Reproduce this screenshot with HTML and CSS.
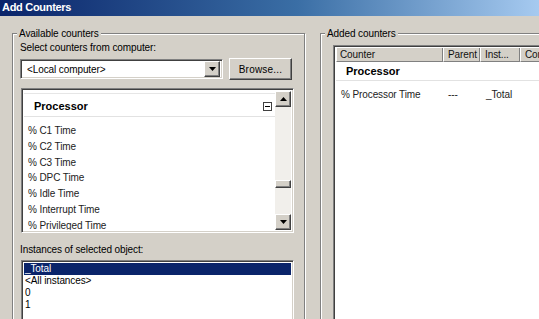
FILE: index.html
```html
<!DOCTYPE html>
<html lang="en">
<head>
    <meta charset="UTF-8">
    <title>Add Counters</title>
    <link rel="stylesheet" href="styles.css">
</head>
<body>

<div class="titlebar">Add Counters</div>

<div class="dialog">
    <div class="group group-left">
        <span class="group-title">Available counters</span>

        <div class="label">Select counters from computer:</div>
        <div class="combo-row">
            <div class="combo">
                <span class="combo-text">&lt;Local computer&gt;</span>
                <span class="btn3d arrow-btn">
                    <svg width="7" height="4" viewBox="0 0 7 4"><path d="M0 0h7L3.5 4z" fill="#000"/></svg>
                </span>
            </div>
            <button class="btn3d btn-browse">Browse...</button>
        </div>

        <div class="listbox object-list">
            <div class="list-body">
                <div class="group-sep"></div>
                <div class="object-head">
                    <span>Processor</span>
                    <span class="minus-box"></span>
                </div>
                <div class="object-items">
                    <div class="item">% C1 Time</div>
                    <div class="item">% C2 Time</div>
                    <div class="item">% C3 Time</div>
                    <div class="item">% DPC Time</div>
                    <div class="item">% Idle Time</div>
                    <div class="item">% Interrupt Time</div>
                    <div class="item">% Privileged Time</div>
                </div>
            </div>
            <div class="scrollbar">
                <span class="btn3d scroll-btn">
                    <svg width="7" height="4" viewBox="0 0 7 4"><path d="M0 4h7L3.5 0z" fill="#000"/></svg>
                </span>
                <div class="track">
                    <span class="btn3d thumb"></span>
                </div>
                <span class="btn3d scroll-btn">
                    <svg width="7" height="4" viewBox="0 0 7 4"><path d="M0 0h7L3.5 4z" fill="#000"/></svg>
                </span>
            </div>
        </div>

        <div class="label label-instances">Instances of selected object:</div>
        <div class="listbox instance-list">
            <div class="inst selected">_Total</div>
            <div class="inst">&lt;All instances&gt;</div>
            <div class="inst">0</div>
            <div class="inst">1</div>
        </div>
    </div>

    <div class="group group-right">
        <span class="group-title">Added counters</span>

        <div class="listview">
            <div class="lv-header">
                <span class="col col-counter">Counter</span>
                <span class="col col-parent">Parent</span>
                <span class="col col-inst">Inst...</span>
                <span class="col col-comp">Computer</span>
            </div>
            <div class="lv-group">Processor</div>
            <div class="lv-row">
                <span class="cell col-counter">% Processor Time</span>
                <span class="cell col-parent">---</span>
                <span class="cell col-inst">_Total</span>
            </div>
        </div>
    </div>
</div>

</body>
</html>
```

FILE: styles.css
```css
body {
    margin: 0;
    width: 539px;
    height: 319px;
    overflow: hidden;
    background-color: #d4d0c8;
    font-family: 'Liberation Sans', Arial, sans-serif;
    font-size: 10px;
    letter-spacing: -0.1px;
    color: #000;
}

.titlebar {
    height: 16px;
    line-height: 15px;
    padding-left: 2px;
    background: linear-gradient(to right, #0a246a, #3a6ea5 55%, #a6caf0);
    color: #fff;
    font-size: 11px;
    font-weight: bold;
    letter-spacing: -0.3px;
}

.dialog {
    display: flex;
    padding: 17px 0 0 12px;
}

.group {
    position: relative;
    box-sizing: border-box;
    height: 300px;
    border: 1px solid #808080;
    box-shadow: inset 1px 1px 0 #fff, 1px 1px 0 #fff;
}

.group-left {
    width: 293px;
    flex-shrink: 0;
    padding: 7px 0 0 7px;
}

.group-right {
    width: 240px;
    flex-shrink: 0;
    margin-left: 15px;
    padding: 11px 0 0 12px;
}

.group-title {
    position: absolute;
    top: -7px;
    left: 4px;
    padding: 0 2px;
    line-height: 13px;
    background-color: #d4d0c8;
}

.label {
    line-height: 13px;
}

.btn3d {
    box-sizing: border-box;
    display: flex;
    align-items: center;
    justify-content: center;
    background-color: #d4d0c8;
    border: 1px solid;
    border-color: #fff #404040 #404040 #fff;
    box-shadow: inset -1px -1px 0 #808080, inset 1px 1px 0 #d4d0c8;
}

.combo-row {
    display: flex;
    align-items: center;
    margin-top: 4px;
}

.combo {
    box-sizing: border-box;
    display: flex;
    align-items: center;
    justify-content: space-between;
    width: 203px;
    height: 20px;
    padding: 2px;
    background-color: #fff;
    border: 1px solid;
    border-color: #808080 #fff #fff #808080;
    box-shadow: inset 1px 1px 0 #404040, inset -1px -1px 0 #d4d0c8;
}

.combo-text {
    padding-left: 4px;
}

.arrow-btn {
    width: 16px;
    height: 16px;
}

.btn-browse {
    width: 63px;
    height: 22px;
    margin-left: 6px;
    padding: 0;
    font-family: inherit;
    font-size: 10px;
    letter-spacing: 0.2px;
    color: #000;
}

.listbox {
    box-sizing: border-box;
    background-color: #fff;
    border: 1px solid;
    border-color: #808080 #fff #fff #808080;
    box-shadow: inset 1px 1px 0 #404040, inset -1px -1px 0 #d4d0c8;
    padding: 2px;
}

.object-list {
    display: flex;
    width: 273px;
    height: 145px;
    margin: 8px 0 0 1px;
}

.list-body {
    flex: 1;
    overflow: hidden;
}

.group-sep {
    height: 1px;
    margin: 2px 0 0;
    background-color: #e6e6e6;
}

.object-head {
    display: flex;
    justify-content: space-between;
    align-items: center;
    padding: 6px 3px 3px 10px;
    line-height: 13px;
    font-weight: bold;
    font-size: 11px;
    letter-spacing: 0;
    border-bottom: 1px solid #e2e2e2;
}

.minus-box {
    position: relative;
    box-sizing: border-box;
    width: 9px;
    height: 9px;
    border: 1px solid #404040;
}

.minus-box::after {
    content: "";
    position: absolute;
    left: 1px;
    top: 3px;
    width: 5px;
    height: 1px;
    background-color: #000;
}

.object-items {
    margin-top: 6px;
    padding-left: 4px;
    color: #222;
}

.item {
    line-height: 15.8px;
}

.scrollbar {
    display: flex;
    flex-direction: column;
    width: 16px;
}

.scroll-btn {
    width: 16px;
    height: 16px;
}

.track {
    flex: 1;
    background-color: #f1efeb;
    padding-top: 73px;
}

.thumb {
    width: 16px;
    height: 8px;
}

.label-instances {
    margin-top: 10px;
}

.instance-list {
    width: 273px;
    height: 80px;
    margin: 4px 0 0 1px;
}

.inst {
    line-height: 12px;
    padding-left: 1px;
}

.inst.selected {
    background-color: #0a246a;
    color: #fff;
}

.listview {
    box-sizing: border-box;
    width: 240px;
    height: 300px;
    background-color: #fff;
    border: 1px solid;
    border-color: #808080 #fff #fff #808080;
    box-shadow: inset 1px 1px 0 #404040;
    padding: 2px 0 0 2px;
}

.lv-header {
    display: flex;
    height: 14px;
    white-space: nowrap;
    overflow: hidden;
}

.col {
    box-sizing: border-box;
    flex-shrink: 0;
    overflow: hidden;
    line-height: 13px;
    padding-left: 4px;
    background-color: #d4d0c8;
    border-left: 1px solid #fff;
    border-right: 1px solid #808080;
    border-bottom: 1px solid #808080;
    color: #111;
}

.lv-header .col-counter {
    padding-left: 3px;
}

.col-counter {
    width: 107px;
}

.col-parent {
    width: 37px;
}

.col-inst {
    width: 40px;
}

.col-comp {
    width: 60px;
}

.lv-group {
    padding: 3px 0 2px 10px;
    line-height: 13px;
    font-weight: bold;
    font-size: 11px;
    letter-spacing: 0;
    border-bottom: 1px solid #e2e2e2;
}

.lv-row {
    display: flex;
    margin-top: 7px;
    line-height: 13px;
    color: #222;
}

.cell {
    box-sizing: border-box;
    flex-shrink: 0;
}

.lv-row .col-counter {
    padding-left: 5px;
}

.lv-row .col-parent {
    padding-left: 5px;
}

.lv-row .col-inst {
    padding-left: 6px;
}
```
